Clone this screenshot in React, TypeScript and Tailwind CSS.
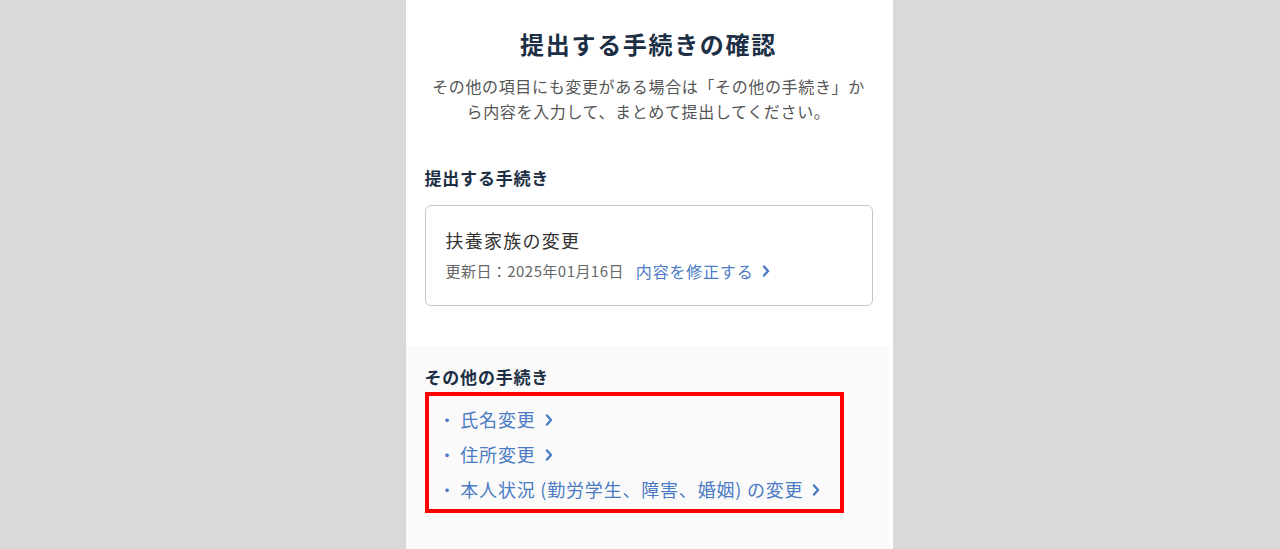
// confirmation screen for submitted procedures
const FONT = { fontFamily: '"Noto Sans CJK JP", "Noto Sans", sans-serif' };

function Chevron({ className = "" }: { className?: string }) {
  return (
    <svg
      viewBox="0 0 8 12"
      width={8}
      height={12}
      className={className}
      fill="none"
      stroke="currentColor"
      strokeWidth={2.4}
      strokeLinecap="round"
      strokeLinejoin="round"
      aria-hidden
    >
      <polyline points="2,1.5 6,6 2,10.5" />
    </svg>
  );
}

const others = ["氏名変更", "住所変更", "本人状況 (勤労学生、障害、婚姻) の変更"];

export default function App() {
  return (
    <div className="min-h-[549px] bg-[#d9d9d9] flex justify-center pl-[18px] tracking-[0.05em]" style={FONT}>
      <main className="w-[487px] bg-white flex flex-col">
        <section className="pl-[19px] pr-[20px] pt-[28px] pb-[40px]">
          <h1 className="text-center text-[24px] leading-[32px] font-bold text-[#1c2f45] tracking-[0.07em]">
            提出する手続きの確認
          </h1>
          <p className="mt-[14px] text-center text-[16px] leading-[25px] text-[#555] tracking-[0.04em]">
            その他の項目にも変更がある場合は「その他の手続き」から内容を入力して、まとめて提出してください。
          </p>

          <h2 className="mt-[42px] text-[17px] leading-[24px] font-bold text-[#1c2f45]">提出する手続き</h2>
          <div className="mt-[15px] border border-[#c8c8c8] rounded-[6px] pl-[20px] pt-[20px] pb-[22px]">
            <p className="text-[18px] leading-[28px] text-[#333] tracking-[0.07em]">扶養家族の変更</p>
            <div className="mt-[5px] flex items-center leading-[24px]">
              <span className="text-[15px] text-[#666] tracking-[0.03em]">更新日：2025年01月16日</span>
              <a href="#edit" className="ml-[12px] flex items-center gap-[9px] text-[16px] text-[#4a7bc4] no-underline">
                内容を修正する
                <Chevron />
              </a>
            </div>
          </div>
        </section>

        <section className="flex-1 bg-[#fafafa] mr-[3px] pl-[19px] pr-[17px] pt-[19px]">
          <h2 className="text-[17px] leading-[24px] font-bold text-[#1c2f45]">その他の手続き</h2>
          <ul className="mt-[3px] w-[419px] border-4 border-[#f00] pl-[10px] pt-[6px] pb-[2px]">
            {others.map((item) => (
              <li key={item} className="flex items-center text-[18px] leading-[35px] text-[#4a7bc4]">
                <span className="text-[17px]">・</span>
                <a href="#other" className="ml-[4px] flex items-center gap-[9px] no-underline text-[#4a7bc4]">
                  {item}
                  <Chevron />
                </a>
              </li>
            ))}
          </ul>
        </section>
      </main>
    </div>
  );
}
